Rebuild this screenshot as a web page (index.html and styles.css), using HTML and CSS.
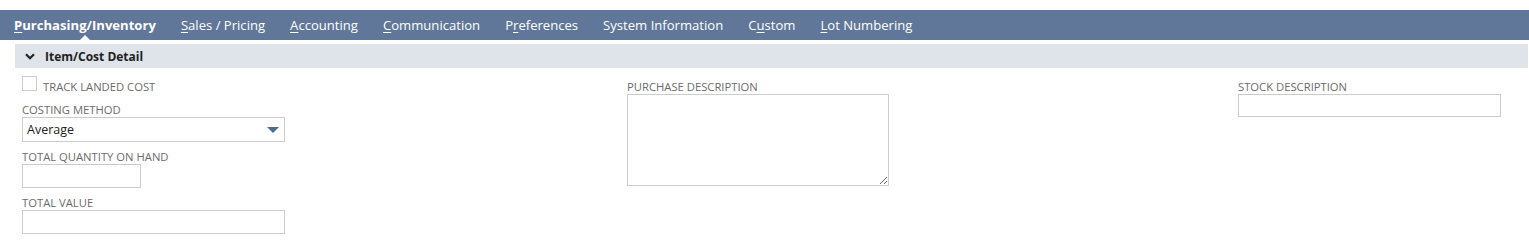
FILE: index.html
```html
<!DOCTYPE html>
<html>
<head>
    <meta name="viewport" content="width=device-width, initial-scale=1">
    <link rel="stylesheet" href="styles.css">
</head>
<body>
    <!-- Subtab bar -->
    <div class="subtabs">
        <div class="subtab active-subtab"><u>P</u>urchasing/Inventory</div>
        <div class="subtab"><u>S</u>ales / Pricing</div>
        <div class="subtab"><u>A</u>ccounting</div>
        <div class="subtab"><u>C</u>ommunication</div>
        <div class="subtab">P<u>r</u>eferences</div>
        <div class="subtab">System Information</div>
        <div class="subtab">C<u>u</u>stom</div>
        <div class="subtab"><u>L</u>ot Numbering</div>
    </div>

    <div class="section">
        <div class="section-head">
            <svg class="chevron" width="10" height="7" viewBox="0 0 10 7">
                <path d="M1 1.2 L5 5.2 L9 1.2" fill="none" stroke="#222" stroke-width="2.2"/>
            </svg>
            Item/Cost Detail
        </div>

        <div class="field-grid">
            <div class="col">
                <div class="check-row">
                    <span class="checkbox"></span>
                    <span class="field-label">TRACK LANDED COST</span>
                </div>
                <div class="field">
                    <div class="field-label">COSTING METHOD</div>
                    <div class="select wide">Average<span class="caret"></span></div>
                </div>
                <div class="field">
                    <div class="field-label">TOTAL QUANTITY ON HAND</div>
                    <div class="input narrow"></div>
                </div>
                <div class="field">
                    <div class="field-label">TOTAL VALUE</div>
                    <div class="input wide"></div>
                </div>
            </div>

            <div class="col col-offset">
                <div class="field">
                    <div class="field-label">PURCHASE DESCRIPTION</div>
                    <textarea class="textarea"></textarea>
                </div>
            </div>

            <div class="col col-offset">
                <div class="field">
                    <div class="field-label">STOCK DESCRIPTION</div>
                    <div class="input wide short"></div>
                </div>
            </div>
        </div>
    </div>
</body>
</html>
```

FILE: styles.css
```css
/* Page basics */
body {
    margin: 0;
    padding-top: 10px;
    font-family: "Open Sans", "Liberation Sans", sans-serif;
    background: #fff;
}

/* Subtab bar */
.subtabs {
    display: flex;
    height: 30px;
    background-color: #607799;
    padding-left: 1.5px;
}

.subtab {
    position: relative;
    box-sizing: border-box;
    height: 30px;
    padding: 1px 12.5px 0;
    color: #fff;
    font-size: 13.1px;
    line-height: 29px;
    white-space: nowrap;
}

.subtab u {
    text-underline-offset: 2px;
}

.active-subtab {
    font-weight: 700;
}

/* little pointer under the active tab */
.active-subtab::after {
    content: "";
    position: absolute;
    left: 50%;
    bottom: 0;
    margin-left: -5px;
    border-left: 5px solid transparent;
    border-right: 5px solid transparent;
    border-bottom: 5px solid #fff;
}

/* Section */
.section {
    margin: 4px 1px 0 15px;
}

.section-head {
    display: flex;
    align-items: center;
    height: 24px;
    background-color: #dfe3ea;
    color: #222;
    font-size: 12px;
    font-weight: 700;
    padding-left: 10px;
}

.chevron {
    margin-right: 10px;
}

/* Fields */
.field-grid {
    display: grid;
    grid-template-columns: 605px 611px 1fr;
    padding: 8px 0 0 7px;
}

.col-offset {
    padding-top: 4px;
}

.field {
    margin-bottom: 8px;
}

.field-label {
    color: #6b6b6b;
    font-size: 11.25px;
    line-height: 14px;
    white-space: nowrap;
}

.check-row {
    display: flex;
    align-items: flex-start;
    height: 19px;
    margin-bottom: 8px;
}

.check-row .field-label {
    padding: 4px 0 0 6px;
}

.checkbox {
    width: 13px;
    height: 13px;
    border: 1px solid #ccc;
    background: #fff;
}

.input,
.select {
    box-sizing: border-box;
    height: 24px;
    border: 1px solid #ccc;
    background: #fff;
}

.wide {
    width: 263px;
}

.narrow {
    width: 119px;
}

.short {
    height: 23px;
}

.select {
    position: relative;
    height: 25px;
    padding: 1px 0 0 4px;
    font-size: 12.5px;
    line-height: 22px;
    color: #222;
}

.caret {
    position: absolute;
    right: 5px;
    top: 9px;
    border-left: 6px solid transparent;
    border-right: 6px solid transparent;
    border-top: 6px solid #4d6b94;
}

.textarea {
    display: block;
    box-sizing: border-box;
    width: 262px;
    height: 92px;
    margin: 0;
    border: 1px solid #ccc;
    resize: both;
    font-family: inherit;
}
```
